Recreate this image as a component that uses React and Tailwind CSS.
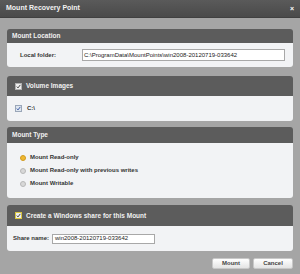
import React from "react";

const font = { fontFamily: '"Liberation Sans", Arial, sans-serif' };

function Check({ focus }) {
  return (
    <div
      className={`w-[7px] h-[7px] flex items-center justify-center bg-[#eeeeee] border ${
        focus ? "border-[#d8c640]" : "border-[#b0b0b0]"
      }`}
    >
      <svg width="5" height="5" viewBox="0 0 5 5">
        <path d="M0.8 2.6 L2 3.9 L4.3 0.9" stroke="#333" strokeWidth="0.9" fill="none" />
      </svg>
    </div>
  );
}

function BodyCheck() {
  return (
    <div className="w-[7px] h-[7px] flex items-center justify-center bg-[#dfe6ef] border border-[#9aa6b8]">
      <svg width="5" height="5" viewBox="0 0 5 5">
        <path d="M0.8 2.6 L2 3.9 L4.3 0.9" stroke="#3050a0" strokeWidth="0.9" fill="none" />
      </svg>
    </div>
  );
}

function Radio({ on, label }) {
  return (
    <div className="flex items-center h-[13px]">
      <div
        className={`w-[6px] h-[6px] rounded-full border ${
          on ? "bg-[#f0b830] border-[#d09a20]" : "bg-[#d8d8d8] border-[#b8b8b8]"
        }`}
      />
      <span className="ml-[4px] text-[6px] text-[#333] font-semibold">{label}</span>
    </div>
  );
}

export default function App() {
  return (
    <div className="w-[300px] h-[274px] flex flex-col bg-[#a5a5a5] overflow-hidden" style={font}>
      <div className="h-[18px] flex items-center justify-between pl-[6px] pr-[6px] bg-gradient-to-b from-[#5a5a5a] to-[#4a4a4a] border-b border-[#404040]">
        <span className="text-[7px] font-bold text-[#f2f2f2]">Mount Recovery Point</span>
        <span className="text-[7px] font-bold text-white leading-none">×</span>
      </div>
      <div className="flex-1 flex flex-col pl-[7px] pr-[7px] pt-[11px]">
        {/* Mount Location */}
        <div className="rounded-[3px] overflow-hidden">
          <div className="h-[14px] bg-[#5c5c5c] flex items-center pl-[5px] text-[6.5px] text-[#f0f0f0] font-semibold">
            Mount Location
          </div>
          <div className="h-[24px] bg-[#f2f3f5] flex items-center pl-[13px] pr-[8px]">
            <span className="w-[62px] text-[6px] text-[#333] font-semibold">Local folder:</span>
            <div className="flex-1 h-[12px] bg-white border border-[#a8a8a8] flex items-center pl-[1px] text-[6px] text-[#222]">
              C:\ProgramData\MountPoints\win2008-20120719-033642
            </div>
          </div>
        </div>
        {/* Volume Images */}
        <div className="mt-[9px] rounded-[3px] overflow-hidden">
          <div className="h-[20px] bg-[#5c5c5c] flex items-center pl-[8px] text-[6.5px] text-[#f0f0f0] font-semibold">
            <Check />
            <span className="ml-[4px]">Volume Images</span>
          </div>
          <div className="h-[25px] bg-[#f2f3f5] flex items-center pl-[8px] text-[6px] text-[#333] font-semibold">
            <BodyCheck />
            <span className="ml-[5px]">C:\</span>
          </div>
        </div>
        {/* Mount Type */}
        <div className="mt-[6px] rounded-[3px] overflow-hidden">
          <div className="h-[16px] bg-[#5c5c5c] flex items-center pl-[5px] text-[6.5px] text-[#f0f0f0] font-semibold">
            Mount Type
          </div>
          <div className="h-[55px] bg-[#f2f3f5] flex flex-col pl-[13px] pt-[8px]">
            <Radio on label="Mount Read-only" />
            <Radio label="Mount Read-only with previous writes" />
            <Radio label="Mount Writable" />
          </div>
        </div>
        {/* Share */}
        <div className="mt-[7px] rounded-[3px] overflow-hidden">
          <div className="h-[21px] bg-[#5c5c5c] flex items-center pl-[8px] text-[6.5px] text-[#f0f0f0] font-semibold">
            <Check focus />
            <span className="ml-[4px]">Create a Windows share for this Mount</span>
          </div>
          <div className="h-[25px] bg-[#f2f3f5] flex items-center pl-[6px]">
            <span className="w-[39px] text-[6px] text-[#333] font-semibold">Share name:</span>
            <div className="w-[103px] h-[10px] bg-white border border-[#a8a8a8] flex items-center pl-[2px] text-[6px] text-[#222]">
              win2008-20120719-033642
            </div>
          </div>
        </div>
        {/* Buttons */}
        <div className="mt-[7px] flex justify-end gap-[3px]">
          <div className="w-[38px] h-[11px] rounded-[2px] bg-gradient-to-b from-[#ffffff] to-[#e4e4e4] border border-[#c8c8c8] flex items-center justify-center text-[6px] font-bold text-[#444]">
            Mount
          </div>
          <div className="w-[40px] h-[11px] rounded-[2px] bg-gradient-to-b from-[#ffffff] to-[#e4e4e4] border border-[#c8c8c8] flex items-center justify-center text-[6px] font-bold text-[#444]">
            Cancel
          </div>
        </div>
      </div>
    </div>
  );
}
